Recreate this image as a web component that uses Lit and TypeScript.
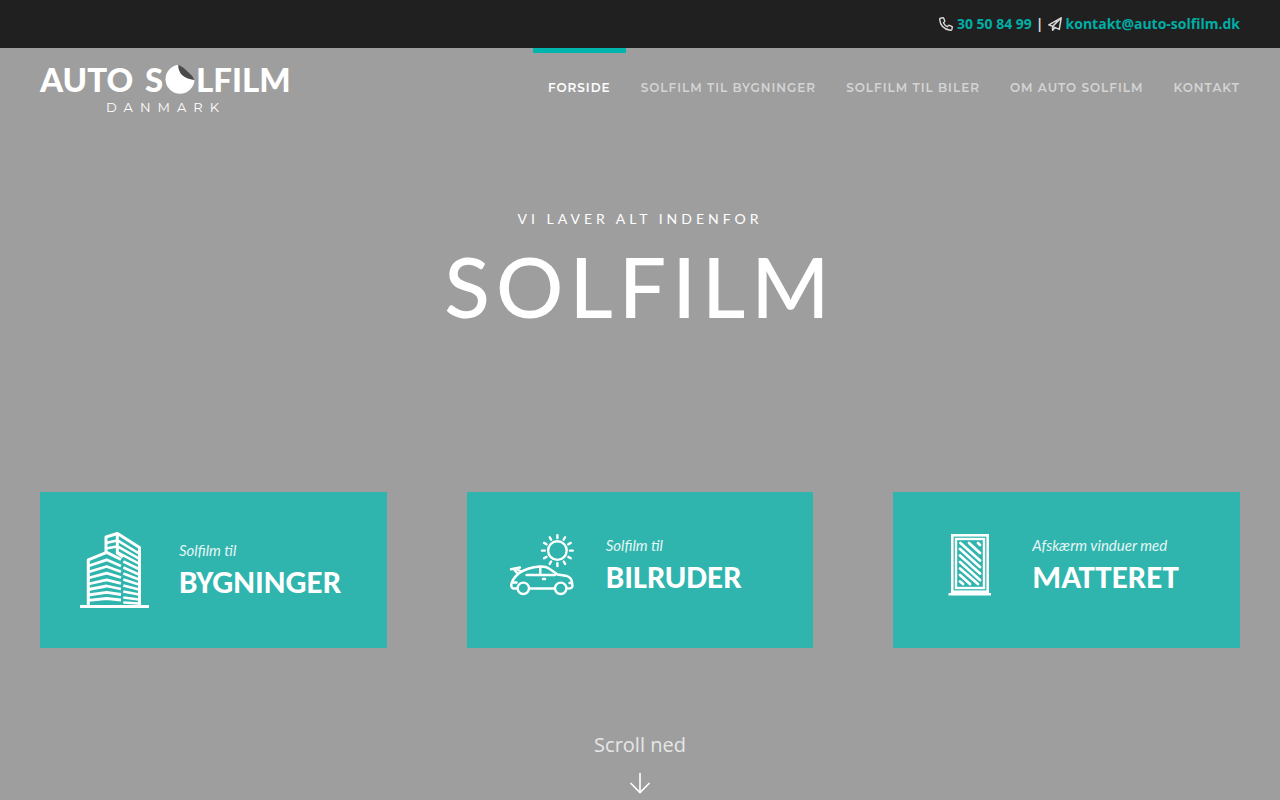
import { LitElement, html, css, svg } from "lit";
import { customElement, property } from "lit/decorators.js";

const buildingIcon = html`<svg width="69" height="76" viewBox="0 0 69 76" fill="none" stroke="#fff" stroke-linejoin="round" aria-hidden="true">
  <path stroke-width="3" d="M0 74.500H69M8.300 74V27.800L26.700 20.300L41 27.500M59.500 74V15.500L37.500 1.500L26 5V20M37.300 2V21L43 25" />
  <path stroke-width="2.400" d="M26 11L37 8.500M26 16.500L37 14.500" />
  <path stroke-width="2.600" d="M38 8.700L59 21.500M38 14.700L59 26.700M38 20.700L59 31.700M43.300 29.500L59 37M43.300 35.500L59 42.500M43.300 41.500L59 47.500M43.300 47.500L59 52.500M43.300 53.500L59 57.500M43.300 59.500L59 62.500M43.300 65.500L59 67.500M43.300 70.500L59 71.500" />
  <path stroke-width="2.800" d="M8.300 34L26.700 27.800L41 34M8.300 40L26.700 34.500L41 39.800M8.300 46L26.700 41.200L41 45.500M8.300 52L26.700 47.800L41 51.300M8.300 57.500L26.700 54L41 57M8.300 63L26.700 60.300L41 62.500M8.300 68.300L26.700 66.500L41 68" />
</svg>`;

const rays = Array.from({ length: 12 }, (_, i) => i * 30);
const carIcon = html`<svg width="69" height="65" viewBox="0 0 69 65" fill="none" stroke="#fff" stroke-width="2.400" stroke-linecap="round" stroke-linejoin="round" aria-hidden="true">
  <circle cx="50.400" cy="18.600" r="9.300" />
  ${rays.map((a) => svg`<path d="M50.400 6V3.200" transform="rotate(${a} 50.400 18.600)" />`)}
  <path d="M10 56.500H6Q4 55.500 4.300 52.500Q5 47.500 11.500 41.500Q20 35.500 33 34.500Q39 34.200 42 36.500L50.500 42.500L60 44Q64 45.500 64.800 49L65.500 54Q65.300 56.500 61 56.500M22.500 56.500H47.500" />
  <path d="M4 37.200L13 35.500M7 37.500L11 42M9.500 37L14 39.500M19.500 43H48M33.300 35V43M36 47H38M5.500 50.500H9.500M62.500 51H65" />
  <circle cx="16.300" cy="56.300" r="5.700" /><circle cx="53.700" cy="56.300" r="5.700" />
</svg>`;

const windowIcon = html`<svg width="69" height="65" viewBox="0 0 69 65" fill="none" stroke="#fff" aria-hidden="true">
  <rect x="19.300" y="3.300" width="35.400" height="56.400" stroke-width="2.600" />
  <rect x="23" y="7" width="28" height="49" stroke-width="2.400" />
  <path d="M15.500 62.300H58" stroke-width="2.600" />
  <path stroke-width="2.800" stroke-linecap="round" d="M45 11L47 13M36 11L47 21M27.500 11L47 28.500M27 17L47 35M27 23.500L47 41.500M27 30L47 48M27 36.500L45 52M27 43L37 52M27 49.500L30 52" />
</svg>`;

@customElement("service-card")
export class ServiceCard extends LitElement {
  static styles = css`
    :host { display: block; }
    .card {
      box-sizing: border-box; height: 100%; padding: 40px; display: flex; align-items: flex-start;
      background: #2fb4ae; color: #fff; text-decoration: none;
    }
    .row { display: flex; align-items: center; gap: 30px; }
    .row svg { display: block; flex: none; overflow: visible; }
    .copy { font-family: Lato, sans-serif; white-space: nowrap; }
    .lead { margin: 0; font-size: 15px; line-height: 24px; font-style: italic; font-weight: 400; color: #e6f6f5; }
    .name { margin: 0; font-family: Carlito, Lato, sans-serif; font-size: 33px; line-height: 40px; font-weight: 700; }
  `;
  @property() lead = "";
  @property() name = "";
  @property({ attribute: false }) icon: unknown;

  render() {
    return html`<a class="card" href="#">
      <div class="row">${this.icon}
        <div class="copy"><p class="lead">${this.lead}</p><h2 class="name">${this.name}</h2></div>
      </div>
    </a>`;
  }
}

@customElement("app-root")
export class AppRoot extends LitElement {
  static styles = css`
    :host { display: block; min-height: 100vh; background: #9e9e9e; color: #fff; font-family: "Open Sans", sans-serif; }
    a { text-decoration: none; }
    .topbar {
      display: flex; justify-content: flex-end; align-items: center; gap: 4px; height: 48px; padding: 0 40px;
      background: #202020; color: #d8d8d8; font-size: 14px; font-weight: 700; line-height: 24px;
    }
    .topbar a { color: #00aea6; }
    .topbar svg { display: block; }
    .header { display: flex; justify-content: space-between; align-items: flex-start; padding: 0 40px; height: 80px; }
    .logo { display: block; padding-top: 16px; }
    .logo svg { display: block; overflow: visible; }
    .logo text { fill: #fff; }
    .big { font-family: Lato, sans-serif; font-size: 33px; font-weight: 900; }
    .small { font-family: Montserrat, sans-serif; font-size: 13px; letter-spacing: 7px; }
    .nav { display: flex; margin-right: -15px; }
    .nav a {
      padding: 0 15px; border-top: 5px solid transparent; line-height: 70px; white-space: nowrap;
      font-family: Montserrat, Inter, sans-serif; font-size: 12px; font-weight: 600; letter-spacing: 1px; color: #d4d4d4;
    }
    .nav .active { border-color: #00b5ad; color: #fff; }
    .hero { text-align: center; font-family: Lato, sans-serif; padding-top: 79px; }
    .kicker { margin: 0; font-size: 14px; line-height: 24px; letter-spacing: 4px; }
    .title { margin: 5px 0 0; font-size: 84px; line-height: 100px; font-weight: 500; letter-spacing: 6px; }
    .cards { display: grid; grid-template-columns: repeat(3, 1fr); gap: 80px; padding: 156px 40px 0; }
    .scroll { display: flex; flex-direction: column; align-items: center; gap: 12px; padding-top: 82px; font-size: 20px; line-height: 30px; color: #e6e6e6; }
    .scroll svg { display: block; }
  `;

  render() {
    return html`
      <div class="topbar">
        <svg width="14" height="14" viewBox="0 0 14 14" fill="none" stroke="#d8d8d8" stroke-width="1.400" stroke-linejoin="round" aria-hidden="true"><path d="M3.800 .8L1.500 1.200Q.6 1.500 .7 2.600Q1.500 11.800 11.400 13.300Q12.500 13.400 12.800 12.500L13.300 10.300Q13.400 9.600 12.700 9.300L10.300 8.300Q9.700 8.100 9.300 8.600L8.300 9.700Q5.700 8.500 4.400 5.800L5.500 4.800Q5.900 4.400 5.700 3.800L4.700 1.300Q4.400 .7 3.800 .8Z" /></svg>
        <a href="tel:30508499">30 50 84 99</a>
        <span>|</span>
        <svg width="14" height="14" viewBox="0 0 14 14" fill="none" stroke="#d8d8d8" stroke-width="1.500" stroke-linejoin="round" aria-hidden="true"><path d="M13.200 .8L.8 7.800L4.600 9.400L11.300 12.400ZM13.200 .8L4.600 9.400V13.200L7 10.600" /></svg>
        <a href="mailto:kontakt@auto-solfilm.dk">kontakt@auto-solfilm.dk</a>
      </div>
      <header class="header">
        <a class="logo" href="#" aria-label="Auto Solfilm Danmark">
          <svg width="250" height="50" viewBox="0 0 250 50">
            <text class="big" x="0" y="28">AUTO</text>
            <text class="big" x="105" y="28">S</text>
            <circle cx="140" cy="15.300" r="14.500" fill="#fff" />
            <path d="M138 0L155 0V16Q145 14 141 9Q138 5 138 0Z" fill="#9e9e9e" />
            <path d="M138.500 .8Q138 7 142 11Q146 15 154.500 16Q152 11 148 8Q143 3 138.500 .8Z" fill="#4a4a4a" />
            <text class="big" x="156" y="28">LFILM</text>
            <text class="small" x="66" y="48">DANMARK</text>
          </svg>
        </a>
        <nav class="nav">
          <a class="active" href="#">FORSIDE</a>
          <a href="#">SOLFILM TIL BYGNINGER</a>
          <a href="#">SOLFILM TIL BILER</a>
          <a href="#">OM AUTO SOLFILM</a>
          <a href="#">KONTAKT</a>
        </nav>
      </header>
      <main>
        <section class="hero">
          <p class="kicker">VI LAVER ALT INDENFOR</p>
          <h1 class="title">SOLFILM</h1>
        </section>
        <section class="cards">
          <service-card lead="Solfilm til" name="BYGNINGER" .icon=${buildingIcon}></service-card>
          <service-card lead="Solfilm til" name="BILRUDER" .icon=${carIcon}></service-card>
          <service-card lead="Afskærm vinduer med" name="MATTERET" .icon=${windowIcon}></service-card>
        </section>
        <div class="scroll">
          <span>Scroll ned</span>
          <svg width="22" height="22" viewBox="0 0 22 22" fill="none" stroke="#fff" stroke-width="1.600" aria-hidden="true"><path d="M11 1V20.500M1.500 11L11 20.500L20.500 11" /></svg>
        </div>
      </main>
    `;
  }
}
